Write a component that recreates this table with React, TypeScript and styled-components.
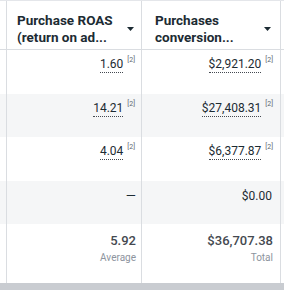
import React from "react";
import styled, { createGlobalStyle } from "styled-components";

const Global = createGlobalStyle`
  html, body { margin: 0; padding: 0; background: #ffffff; }
  body { font-family: Roboto, "Liberation Sans", Arial, sans-serif; width: 284px; height: 290px; overflow: hidden; }
`;

const Page = styled.div`
  display: flex;
  flex-direction: column;
  width: 284px;
  height: 290px;
`;

const Grid = styled.div`
  flex: 1;
  display: flex;
  flex-direction: column;
`;

const Row = styled.div<{ $h: number; $shade?: boolean; $header?: boolean }>`
  display: grid;
  grid-template-columns: 7px 135px 139px 1fr;
  height: ${(p) => p.$h}px;
  background: ${(p) => (p.$shade ? "#f5f6f7" : "#ffffff")};
  border-top: ${(p) => (p.$header ? "1px solid #e4e6ea" : "none")};
  border-bottom: ${(p) => (p.$header ? "1px solid #dadde1" : "none")};
  box-sizing: border-box;
`;

const Gutter = styled.div`
  border-right: 1px solid #dadde1;
`;

const Spacer = styled.div``;

const HeadCell = styled.div<{ $pl: number; $pr: number }>`
  display: flex;
  align-items: center;
  justify-content: space-between;
  padding: 8px ${(p) => p.$pr}px 0 ${(p) => p.$pl}px;
  border-right: 1px solid #dadde1;
  box-sizing: border-box;
`;

const HeadText = styled.div<{ $w: number }>`
  width: ${(p) => p.$w}px;
  font-size: 13.5px;
  font-weight: 700;
  line-height: 17px;
  color: #1c2b33;
`;

const Caret = styled.svg`
  width: 7px;
  height: 4px;
  flex: none;
`;

const Cell = styled.div<{ $pr: number }>`
  display: flex;
  align-items: flex-start;
  justify-content: flex-end;
  padding: 8px ${(p) => p.$pr}px 0 0;
  border-right: 1px solid #dadde1;
  box-sizing: border-box;
`;

const Value = styled.span`
  display: inline-flex;
  align-items: flex-start;
  gap: 4px;
  font-size: 12px;
  color: #1c2b33;
`;

const Dotted = styled.span`
  line-height: 13px;
  border-bottom: 1.5px dotted #444950;
  padding-bottom: 1px;
`;

const Note = styled.span`
  font-size: 7px;
  line-height: 8px;
  color: #606770;
  margin-top: -2px;
`;

const Plain = styled.span<{ $size?: number }>`
  font-size: ${(p) => p.$size ?? 12}px;
  line-height: 14px;
  color: #1c2b33;
`;

const Summary = styled.div<{ $pr: number }>`
  display: flex;
  flex-direction: column;
  align-items: flex-end;
  padding: 8px ${(p) => p.$pr}px 0 0;
  border-right: 1px solid #dadde1;
  box-sizing: border-box;
`;

const SumValue = styled.span`
  font-size: 13px;
  font-weight: 500;
  line-height: 17px;
  color: #444950;
`;

const SumLabel = styled.span`
  font-size: 10px;
  line-height: 14px;
  margin-top: 2px;
  color: #8d949e;
`;

const ScrollBar = styled.div`
  height: 7px;
  background: #c9ccd1;
`;

const CaretIcon = () => (
  <Caret viewBox="0 0 7 4">
    <path d="M0 0 H7 L3.5 4 Z" fill="#1c2b33" />
  </Caret>
);

type R = { a: string; b: string; noteA: boolean; noteB: boolean };

const rows: R[] = [
  { a: "1.60", b: "$2,921.20", noteA: true, noteB: true },
  { a: "14.21", b: "$27,408.31", noteA: true, noteB: true },
  { a: "4.04", b: "$6,377.87", noteA: true, noteB: true },
  { a: "—", b: "$0.00", noteA: false, noteB: false },
];

const heights = [44, 43, 44, 43];

const renderVal = (v: string, note: boolean) =>
  note ? (
    <Value>
      <Dotted>{v}</Dotted>
      <Note>[2]</Note>
    </Value>
  ) : (
    <Plain $size={v === "—" ? 13 : 12}>{v}</Plain>
  );

export default function App() {
  return (
    <Page>
      <Global />
      <Grid>
        <Row $h={50} $header>
          <Gutter />
          <HeadCell $pl={10} $pr={7}>
            <HeadText $w={108}>Purchase ROAS (return on ad...</HeadText>
            <CaretIcon />
          </HeadCell>
          <HeadCell $pl={13} $pr={9}>
            <HeadText $w={100}>Purchases conversion...</HeadText>
            <CaretIcon />
          </HeadCell>
          <Spacer />
        </Row>
        {rows.map((r, i) => (
          <Row key={i} $h={heights[i]} $shade={i % 2 === 1}>
            <Gutter />
            <Cell $pr={r.noteA ? 6 : 5}>{renderVal(r.a, r.noteA)}</Cell>
            <Cell $pr={r.noteB ? 7 : 8}>{renderVal(r.b, r.noteB)}</Cell>
            <Spacer />
          </Row>
        ))}
        <Row $h={59}>
          <Gutter />
          <Summary $pr={5}>
            <SumValue>5.92</SumValue>
            <SumLabel>Average</SumLabel>
          </Summary>
          <Summary $pr={7}>
            <SumValue>$36,707.38</SumValue>
            <SumLabel>Total</SumLabel>
          </Summary>
          <Spacer />
        </Row>
      </Grid>
      <ScrollBar />
    </Page>
  );
}
